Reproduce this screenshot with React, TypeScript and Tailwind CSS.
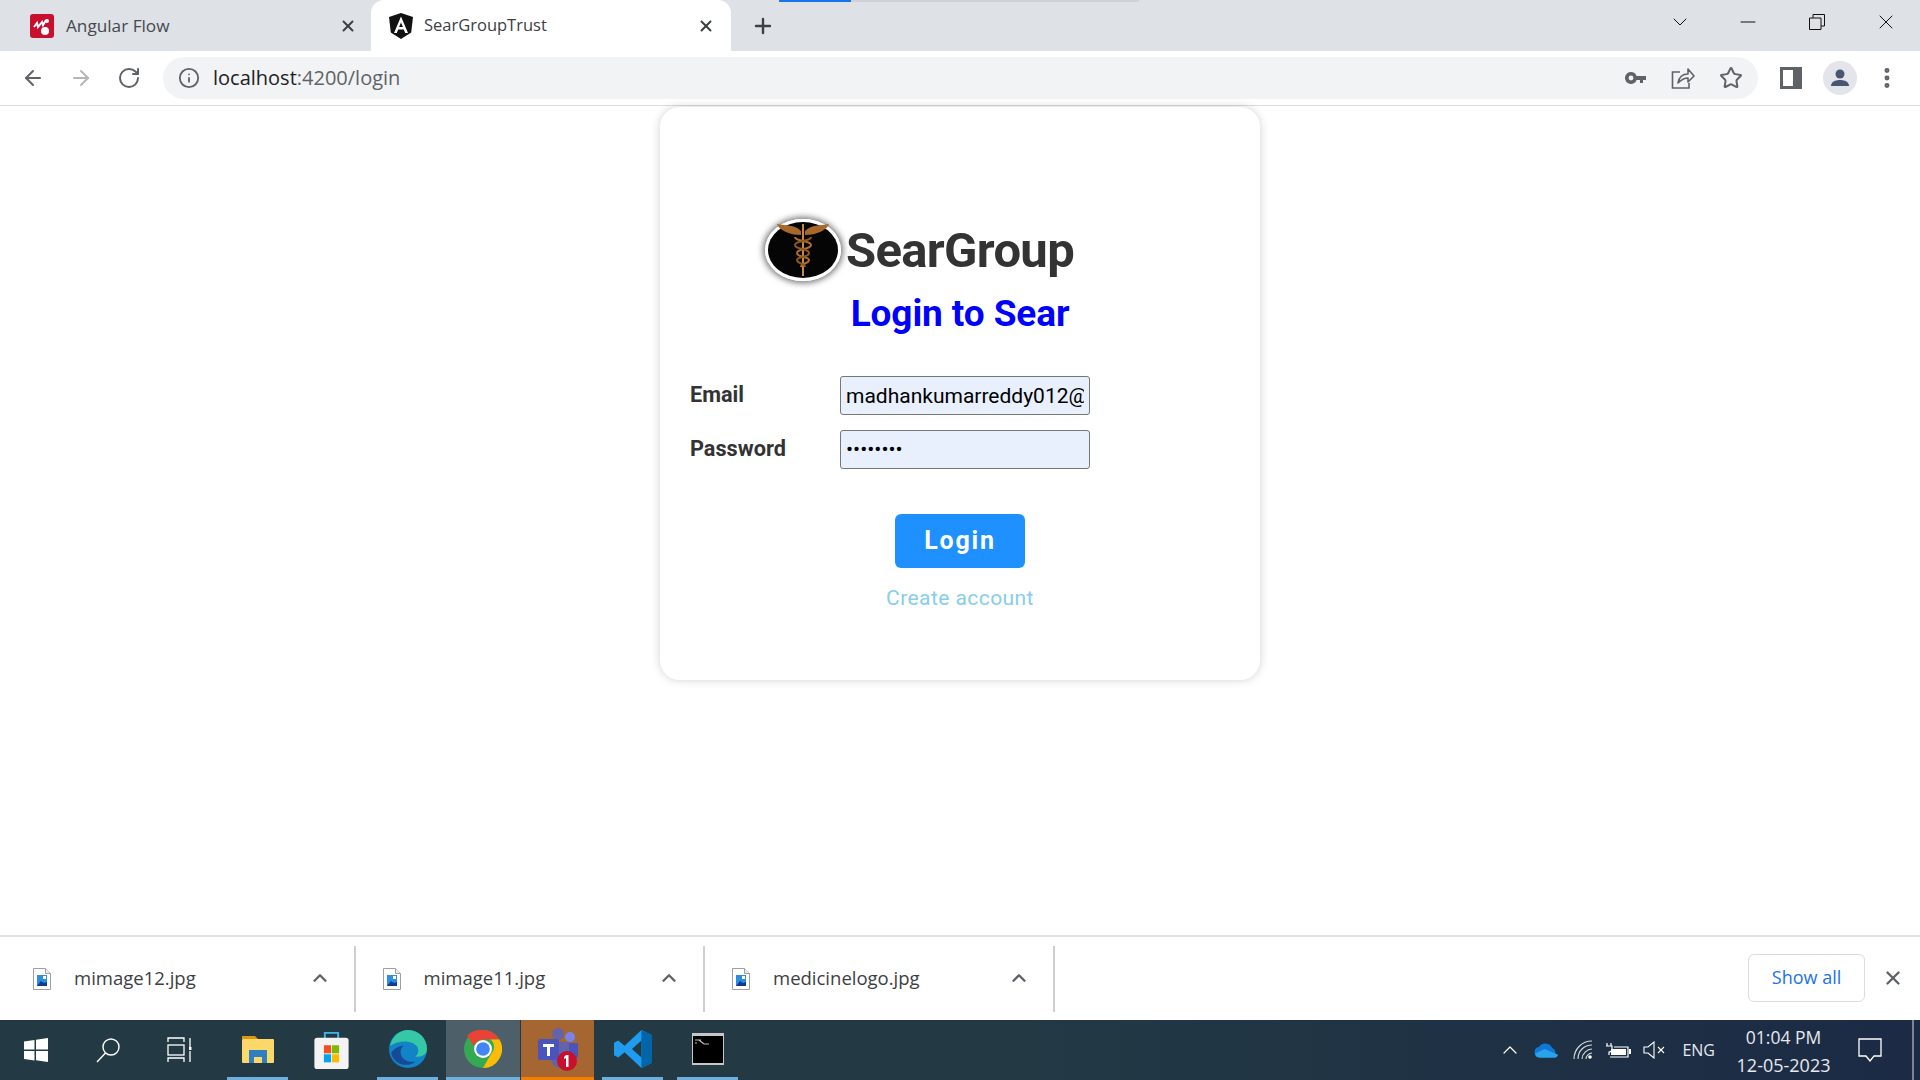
import { ArrowLeft, ArrowRight, RotateCw, Plus, X, ChevronDown, ChevronUp, Minus, Star, MoreVertical, Info } from "lucide-react";

const ui = { fontFamily: '"Open Sans", "Noto Sans", sans-serif' };

function AngularFlowIcon() {
  return (
    <svg viewBox="0 0 24 24" className="h-[24px] w-[24px] shrink-0">
      <rect width="24" height="24" rx="3" fill="#c8102e" />
      <circle cx="15" cy="17" r="4" fill="#fff" />
      <circle cx="17" cy="7" r="2" fill="#fff" />
      <path d="M4 13l3-4 1 4 4-5 1 3 3-5" stroke="#fff" strokeWidth="2" fill="none" />
    </svg>
  );
}

function AngularIcon() {
  return (
    <svg viewBox="0 0 24 26" className="h-[26px] w-[24px] shrink-0">
      <path d="M12 0L0 4l1.8 15.5L12 26l10.2-6.5L24 4z" fill="#111" />
      <path d="M12 3.5L5 20h2.8l1.4-3.6h5.6l1.4 3.6H19L12 3.5zm-1.9 10.6L12 9.4l1.9 4.7z" fill="#fff" />
    </svg>
  );
}

function KeyIcon() {
  return (
    <svg viewBox="0 0 24 24" className="h-[24px] w-[24px]" fill="#5f6368">
      <path d="M7 6a6 6 0 1 0 5.6 8H16v3h3v-3h3v-4H12.6A6 6 0 0 0 7 6zm0 3.6a2.4 2.4 0 1 1 0 4.8 2.4 2.4 0 0 1 0-4.8z" />
    </svg>
  );
}

function ShareIcon() {
  return (
    <svg viewBox="0 0 24 24" className="h-[24px] w-[24px]" fill="none" stroke="#5f6368" strokeWidth="1.6">
      <path d="M9 6H1.5v16H18v-5" />
      <path d="M7 17c1-6 4-9 10-9V3l6 7-6 6v-4c-4 0-7 2-10 5z" strokeLinejoin="round" />
    </svg>
  );
}

function SidePanelIcon() {
  return (
    <svg viewBox="0 0 22 22" className="h-[22px] w-[22px]">
      <rect width="22" height="22" fill="#5f6368" />
      <rect x="3" y="3" width="10" height="16" fill="#fff" />
    </svg>
  );
}

function ProfileIcon() {
  return (
    <div className="flex h-[34px] w-[34px] items-center justify-center rounded-full bg-[#e3e5ea]">
      <svg viewBox="0 0 24 24" className="h-[24px] w-[24px]" fill="#4a5670">
        <circle cx="12" cy="8" r="4.5" />
        <path d="M3 20c0-4 4-6 9-6s9 2 9 6z" />
      </svg>
    </div>
  );
}

function Caduceus() {
  return (
    <svg viewBox="0 0 70 56" className="h-full w-full">
      <ellipse cx="35" cy="28" rx="35" ry="28" fill="#050505" />
      <path d="M33 9C26 2 18 4 9 2c2 6 12 11 24 11zM37 9c7-7 15-5 24-7-2 6-12 11-24 11z" fill="#a8682a" />
      <path d="M35 2v52" stroke="#c98a3d" strokeWidth="2" />
      <path d="M27 15c0 5 16 3 16 8s-14 3-14 8 12 3 12 7-8 3-8 7" stroke="#b0702c" strokeWidth="2" fill="none" />
      <path d="M43 15c0 5-16 3-16 8s14 3 14 8-12 3-12 7 8 3 8 7" stroke="#8f5820" strokeWidth="2" fill="none" />
    </svg>
  );
}

function FileIcon() {
  return (
    <svg viewBox="0 0 18 22" className="h-[22px] w-[18px] shrink-0">
      <path d="M.5.5h12l5 5v16H.5z" fill="#fff" stroke="#9aa0a6" />
      <path d="M12.5.5v5h5" fill="#eee" stroke="#9aa0a6" />
      <rect x="4" y="7" width="10" height="11" fill="#2d8de0" />
      <path d="M4 18l4-5 3 2 3-1v4z" fill="#123a8c" />
      <rect x="10" y="8" width="3" height="3" fill="#fff" />
    </svg>
  );
}

function DownloadItem({ name }: { name: string }) {
  return (
    <div className="flex h-[66px] w-[349.5px] shrink-0 items-center justify-between border-r-2 border-[#cfcfcf] pl-[27px] pr-[23px]">
      <div className="flex items-center gap-[23px]">
        <FileIcon />
        <span className="text-[18.5px] leading-none text-[#3c4043]" style={ui}>
          {name}
        </span>
      </div>
      <ChevronUp className="-mt-[2px] h-[22px] w-[22px] text-[#5f6368]" strokeWidth={2.6} />
    </div>
  );
}

function WindowsIcon() {
  return (
    <svg viewBox="0 0 24 24" className="h-[24px] w-[24px]" fill="#fff">
      <path d="M0 3.5L10.5 2v9.5H0zM12 1.8L24 0v11.5H12zM0 13h10.5v9.5L0 21zM12 13h12v11l-12-1.8z" />
    </svg>
  );
}

function SearchIcon() {
  return (
    <svg viewBox="0 0 26 26" className="h-[26px] w-[26px]" fill="none" stroke="#fff" strokeWidth="1.4">
      <circle cx="16" cy="10" r="8" />
      <path d="M10.5 16L2 25" />
    </svg>
  );
}

function TaskViewIcon() {
  return (
    <svg viewBox="0 0 26 26" className="h-[26px] w-[26px]" fill="none" stroke="#fff" strokeWidth="1.3">
      <path d="M1 5V1h16v4M1 25v-4h16v4" />
      <rect x="1" y="8" width="16" height="10" />
      <path d="M23 1v9M23 14v11" />
      <rect x="22" y="10" width="2.5" height="3" fill="#fff" stroke="none" />
    </svg>
  );
}

function ExplorerIcon() {
  return (
    <svg viewBox="0 0 32 32" className="h-[32px] w-[32px]">
      <path d="M0 3h13l3 3h-16z" fill="#d99a0b" />
      <rect y="6" width="32" height="24" rx="1" fill="#fcd769" />
      <path d="M7 30V17h18v13h-5v-6h-8v6z" fill="#2f7fc0" />
    </svg>
  );
}

function StoreIcon() {
  return (
    <svg viewBox="0 0 36 40" className="h-[38px] w-[35px]">
      <path d="M11 8V2h14v6" fill="none" stroke="#3fb6e8" strokeWidth="2" />
      <rect y="7" width="36" height="33" rx="3" fill="#f3f3f3" />
      <rect x="10" y="15" width="7.5" height="8.5" fill="#f25022" />
      <rect x="18.5" y="15" width="7.5" height="8.5" fill="#7fba00" />
      <rect x="10" y="24.5" width="7.5" height="8.5" fill="#00a4ef" />
      <rect x="18.5" y="24.5" width="7.5" height="8.5" fill="#ffb900" />
    </svg>
  );
}

function EdgeIcon() {
  return (
    <svg viewBox="0 0 36 36" className="h-[38px] w-[38px]">
      <circle cx="18" cy="18" r="18" fill="#1184c8" />
      <path d="M1 15C3 6 10 0 18 0c10 0 18 8 18 18 0 6-6 8-11 7 3-2 4-6 1-10-4-5-16-6-25 0z" fill="#36c7a5" />
      <path d="M11 21c0 6 6 10 14 9-8 6-20 3-23-8 3-5 8-7 12-7-2 1-3 3-3 6z" fill="#164a96" />
    </svg>
  );
}

function ChromeIcon() {
  return (
    <svg viewBox="0 0 36 36" className="h-[38px] w-[38px]">
      <circle cx="18" cy="18" r="18" fill="#34a853" />
      <path d="M18 0a18 18 0 0 1 15.6 9H18a9 9 0 0 0-8.6 6.3L3 5.5A18 18 0 0 1 18 0z" fill="#ea4335" />
      <path d="M33.6 9A18 18 0 0 1 18 36l7.8-13.5A9 9 0 0 0 25 9z" fill="#fbbc05" />
      <circle cx="18" cy="18" r="8.5" fill="#fff" />
      <circle cx="18" cy="18" r="6.5" fill="#4285f4" />
    </svg>
  );
}

function TeamsIcon() {
  return (
    <svg viewBox="0 0 42 44" className="h-[44px] w-[42px]">
      <circle cx="21" cy="7" r="6" fill="#6264a7" />
      <circle cx="33" cy="10" r="5" fill="#7b83eb" />
      <path d="M14 15h18v17a9 9 0 0 1-18 0z" fill="#6264a7" />
      <path d="M32 16h9v12a5 5 0 0 1-9 3z" fill="#4b53bc" />
      <rect x="1" y="12" width="21" height="21" rx="2" fill="#4b53bc" />
      <path d="M6 17h11v3h-4v9h-3v-9H6z" fill="#fff" />
      <circle cx="30" cy="34" r="10" fill="#c8102e" />
      <path d="M29 28h2.5v12H29v-9l-2 1v-2z" fill="#fff" />
    </svg>
  );
}

function VsCodeIcon() {
  return (
    <svg viewBox="0 0 36 36" className="h-[38px] w-[38px]">
      <path d="M26 0l10 5v26l-10 5-16-15-6 5-4-2V12l4-2 6 5zM26 10l-9 8 9 8z" fill="#1f9cf0" />
      <path d="M26 0l10 5v26l-10 5z" fill="#0065a9" />
    </svg>
  );
}

function CmdIcon() {
  return (
    <svg viewBox="0 0 32 32" className="h-[32px] w-[32px]">
      <rect width="32" height="32" fill="#c7c7c7" />
      <rect x="1" y="3" width="30" height="27" fill="#000" />
      <path d="M3 7h6M3 10h2M7 7l5 4M12 11h5" stroke="#bbb" strokeWidth="1.2" />
    </svg>
  );
}

function OneDriveIcon() {
  return (
    <svg viewBox="0 0 26 16" className="h-[16px] w-[25px]">
      <path d="M6 15a5 5 0 0 1-1-10 8 8 0 0 1 14 1 5 5 0 0 1 1 9z" fill="#0f78d4" />
      <path d="M6 16a5 5 0 0 1-5-4l10-5 14 6a4 4 0 0 1-4 3z" fill="#29a4ec" />
    </svg>
  );
}

function WifiIcon() {
  return (
    <svg viewBox="0 0 20 20" className="h-[20px] w-[20px]" fill="none" stroke="#d7dce2" strokeWidth="1.1">
      <path d="M1 19C1 9 9 1 19 1M5 19C5 11 11 5 19 5M9 19c0-5 5-10 10-10M13 19c0-3 3-6 6-6" />
      <circle cx="17" cy="17" r="1.8" fill="#fff" stroke="none" />
    </svg>
  );
}

function BatteryIcon() {
  return (
    <svg viewBox="0 0 26 17" className="h-[17px] w-[26px]" fill="none" stroke="#fff" strokeWidth="1.2">
      <path d="M2 1v3M6 1v3M1 4h6v3c0 2-2 3-3 3v3" />
      <path d="M5 15h18V5H9" />
      <rect x="6" y="7" width="15" height="6" fill="#fff" stroke="none" />
      <rect x="24" y="7" width="2" height="5" fill="#fff" stroke="none" />
    </svg>
  );
}

function VolumeIcon() {
  return (
    <svg viewBox="0 0 22 18" className="h-[18px] w-[22px]" fill="none" stroke="#fff" strokeWidth="1.1">
      <path d="M1 6h4l6-5v16l-6-5H1z" />
      <path d="M15 6l6 6M21 6l-6 6" />
    </svg>
  );
}

function NotificationIcon() {
  return (
    <svg viewBox="0 0 24 24" className="h-[24px] w-[24px]" fill="none" stroke="#fff" strokeWidth="1.3">
      <path d="M1 1h22v17h-7l-4 5-4-5H1z" />
    </svg>
  );
}

export default function App() {
  return (
    <div className="flex h-screen w-full flex-col overflow-hidden bg-white">
      {/* tab strip */}
      <div className="relative flex h-[51px] shrink-0 items-end bg-[#dee1e6]">
        <div className="flex h-[51px] w-[371px] items-center pl-[30px] pr-[14px]">
          <AngularFlowIcon />
          <span className="ml-[12px] flex-1 text-[17.2px] text-[#45494e]" style={ui}>
            Angular Flow
          </span>
          <X className="h-[18px] w-[18px] text-[#3c4043]" strokeWidth={2.6} />
        </div>
        <div className="flex h-[51px] w-[360px] items-center rounded-t-[13px] bg-white pl-[18px] pr-[16px]">
          <AngularIcon />
          <span className="ml-[11px] flex-1 text-[16.5px] text-[#3c4043]" style={ui}>
            SearGroupTrust
          </span>
          <X className="h-[18px] w-[18px] text-[#3c4043]" strokeWidth={2.6} />
        </div>
        <div className="flex h-[51px] w-[64px] items-center justify-center">
          <Plus className="h-[24px] w-[24px] text-[#3c4043]" strokeWidth={2.4} />
        </div>
        <div className="ml-auto flex h-[51px] items-center pb-[8px] text-[#111]">
          <ChevronDown className="mr-[44px] h-[24px] w-[24px]" strokeWidth={1} />
          <Minus className="mr-[49px] h-[24px] w-[24px]" strokeWidth={1} />
          <svg viewBox="0 0 16 16" className="mr-[49px] h-[16px] w-[16px]" fill="none" stroke="#111">
            <path d="M.5 4h11.5v11.5H.5zM4 4V.5h11.5V12H12" />
          </svg>
          <X className="mr-[22px] h-[24px] w-[24px]" strokeWidth={1} />
        </div>
        <div className="absolute left-[779px] top-0 h-[2px] w-[360px] bg-[#cfd3d9]">
          <div className="h-[2px] w-[72px] bg-[#1a73e8]" />
        </div>
      </div>

      {/* toolbar */}
      <div className="flex h-[55px] shrink-0 items-center border-b border-[#dadce0] bg-white pl-[21px]">
        <ArrowLeft className="h-[24px] w-[24px] text-[#5f6368]" strokeWidth={2} />
        <ArrowRight className="ml-[24px] h-[24px] w-[24px] text-[#b4b6b9]" strokeWidth={2} />
        <RotateCw className="ml-[24px] h-[24px] w-[24px] text-[#5f6368]" strokeWidth={2} />
        <div className="ml-[22px] flex h-[42px] w-[1595px] items-center rounded-full bg-[#f1f3f4] pl-[15px] pr-[15px]">
          <Info className="h-[22px] w-[22px] text-[#5f6368]" strokeWidth={2} />
          <span className="ml-[13px] flex-1 text-[20px]" style={ui}>
            <span className="text-[#202124]">localhost</span>
            <span className="text-[#5f6368]">:4200/login</span>
          </span>
          <KeyIcon />
          <div className="ml-[23px]">
            <ShareIcon />
          </div>
          <div className="ml-[24px]">
            <Star className="h-[24px] w-[24px] text-[#5f6368]" strokeWidth={2} />
          </div>
        </div>
        <div className="ml-[22px]">
          <SidePanelIcon />
        </div>
        <div className="ml-[21px]">
          <ProfileIcon />
        </div>
        <MoreVertical className="ml-[17px] h-[26px] w-[26px] text-[#5f6368]" strokeWidth={2.6} />
      </div>

      {/* page */}
      <main className="flex flex-1 justify-center bg-white" style={{ fontFamily: "Roboto, sans-serif" }}>
        <div className="mt-[1px] h-[573px] w-[600px] rounded-[20px] bg-white pt-[111px] shadow-[0_0_10px_rgba(0,0,0,0.18)]">
          <div className="ml-[105px] flex h-[64px] items-center">
            <div className="h-[62px] w-[76px] shrink-0 rounded-[50%] border-[3px] border-white shadow-[0_0_6px_2px_rgba(0,0,0,0.55)]">
              <Caduceus />
            </div>
            <h1 className="ml-[5px] mt-[1px] text-[49px] font-bold leading-none tracking-[-0.67px] text-[#333]">SearGroup</h1>
          </div>
          <h2 className="mt-[7px] text-center text-[37px] font-bold leading-[50px] tracking-[-0.1px] text-[#0000ff]">Login to Sear</h2>
          <div className="mt-[37px] flex flex-col gap-[15px] pl-[30px]">
            <div className="flex items-center">
              <label className="w-[150px] text-[21.7px] font-bold text-[#333]">Email</label>
              <input
                type="text"
                readOnly
                value="madhankumarreddy012@gmail.com"
                className="h-[39px] w-[250px] rounded-[3px] border border-[#767676] bg-[#e8f0fe] px-[5px] text-[21px] text-black outline-none"
              />
            </div>
            <div className="flex items-center">
              <label className="w-[150px] text-[21.7px] font-bold text-[#333]">Password</label>
              <input
                type="password"
                readOnly
                value="password"
                className="h-[39px] w-[250px] rounded-[3px] border border-[#767676] bg-[#e8f0fe] px-[5px] pb-[2px] text-[21px] text-black outline-none"
              />
            </div>
          </div>
          <div className="mt-[45px] flex flex-col items-center">
            <button type="button" className="h-[54px] w-[130px] rounded-[6px] bg-[#1e90ff] text-[25px] font-bold tracking-[1.8px] text-white">
              Login
            </button>
            <a className="mt-[16px] text-[21px] leading-[28px] tracking-[0.43px] text-[#87ceeb]">Create account</a>
          </div>
        </div>
      </main>

      {/* downloads bar */}
      <div className="flex h-[85px] shrink-0 items-center border-t-2 border-[#e3e3e3] bg-white pl-[6px]">
        <DownloadItem name="mimage12.jpg" />
        <DownloadItem name="mimage11.jpg" />
        <DownloadItem name="medicinelogo.jpg" />
        <button type="button" className="-mt-[2px] ml-auto h-[48px] w-[117px] rounded-[6px] border border-[#dadce0] text-[18px] text-[#1a73e8]" style={ui}>
          Show all
        </button>
        <X className="-mt-[2px] ml-[17px] mr-[16px] h-[22px] w-[22px] text-[#5f6368]" strokeWidth={2.6} />
      </div>

      {/* taskbar */}
      <div className="flex h-[60px] shrink-0 items-stretch bg-gradient-to-r from-[#233a44] via-[#233a44] to-[#1c2a45] text-white" style={ui}>
        <div className="flex w-[72px] items-center justify-center">
          <WindowsIcon />
        </div>
        <div className="flex w-[72px] items-center justify-center">
          <SearchIcon />
        </div>
        <div className="flex w-[72px] items-center justify-center">
          <TaskViewIcon />
        </div>
        <div className="ml-[11px] flex w-[61px] items-center justify-center border-b-[3px] border-[#6cb0e0]">
          <ExplorerIcon />
        </div>
        <div className="ml-[13px] flex w-[61px] items-center justify-center">
          <StoreIcon />
        </div>
        <div className="ml-[15px] flex w-[61px] items-center justify-center border-b-[3px] border-[#6cb0e0]">
          <EdgeIcon />
        </div>
        <div className="ml-[8px] flex w-[74px] items-center justify-center border-b-[3px] border-[#6cb0e0] bg-[#4d6069]">
          <ChromeIcon />
        </div>
        <div className="ml-[1px] flex w-[73px] items-center justify-center border-b-[3px] border-[#f57c00] bg-[#a56632]">
          <TeamsIcon />
        </div>
        <div className="ml-[8px] flex w-[61px] items-center justify-center border-b-[3px] border-[#6cb0e0]">
          <VsCodeIcon />
        </div>
        <div className="ml-[14px] flex w-[61px] items-center justify-center border-b-[3px] border-[#6cb0e0]">
          <CmdIcon />
        </div>

        <div className="ml-auto flex items-center">
          <ChevronUp className="h-[24px] w-[24px] text-white" strokeWidth={1.2} />
          <div className="ml-[12px]">
            <OneDriveIcon />
          </div>
          <div className="ml-[14px]">
            <WifiIcon />
          </div>
          <div className="ml-[12px]">
            <BatteryIcon />
          </div>
          <div className="ml-[12px]">
            <VolumeIcon />
          </div>
          <span className="ml-[17px] text-[16px] text-[#e6e9ee]">ENG</span>
          <div className="ml-[22px] flex w-[93px] flex-col items-center pt-[1px] leading-[28px] text-[#e6e9ee]">
            <span className="whitespace-nowrap text-[17.5px]">01:04 PM</span>
            <span className="whitespace-nowrap text-[18px]">12-05-2023</span>
          </div>
          <div className="ml-[28px]">
            <NotificationIcon />
          </div>
          <div className="ml-[30px] h-full w-[2px] bg-[#7d8594]" />
          <div className="w-[6px]" />
        </div>
      </div>
    </div>
  );
}
